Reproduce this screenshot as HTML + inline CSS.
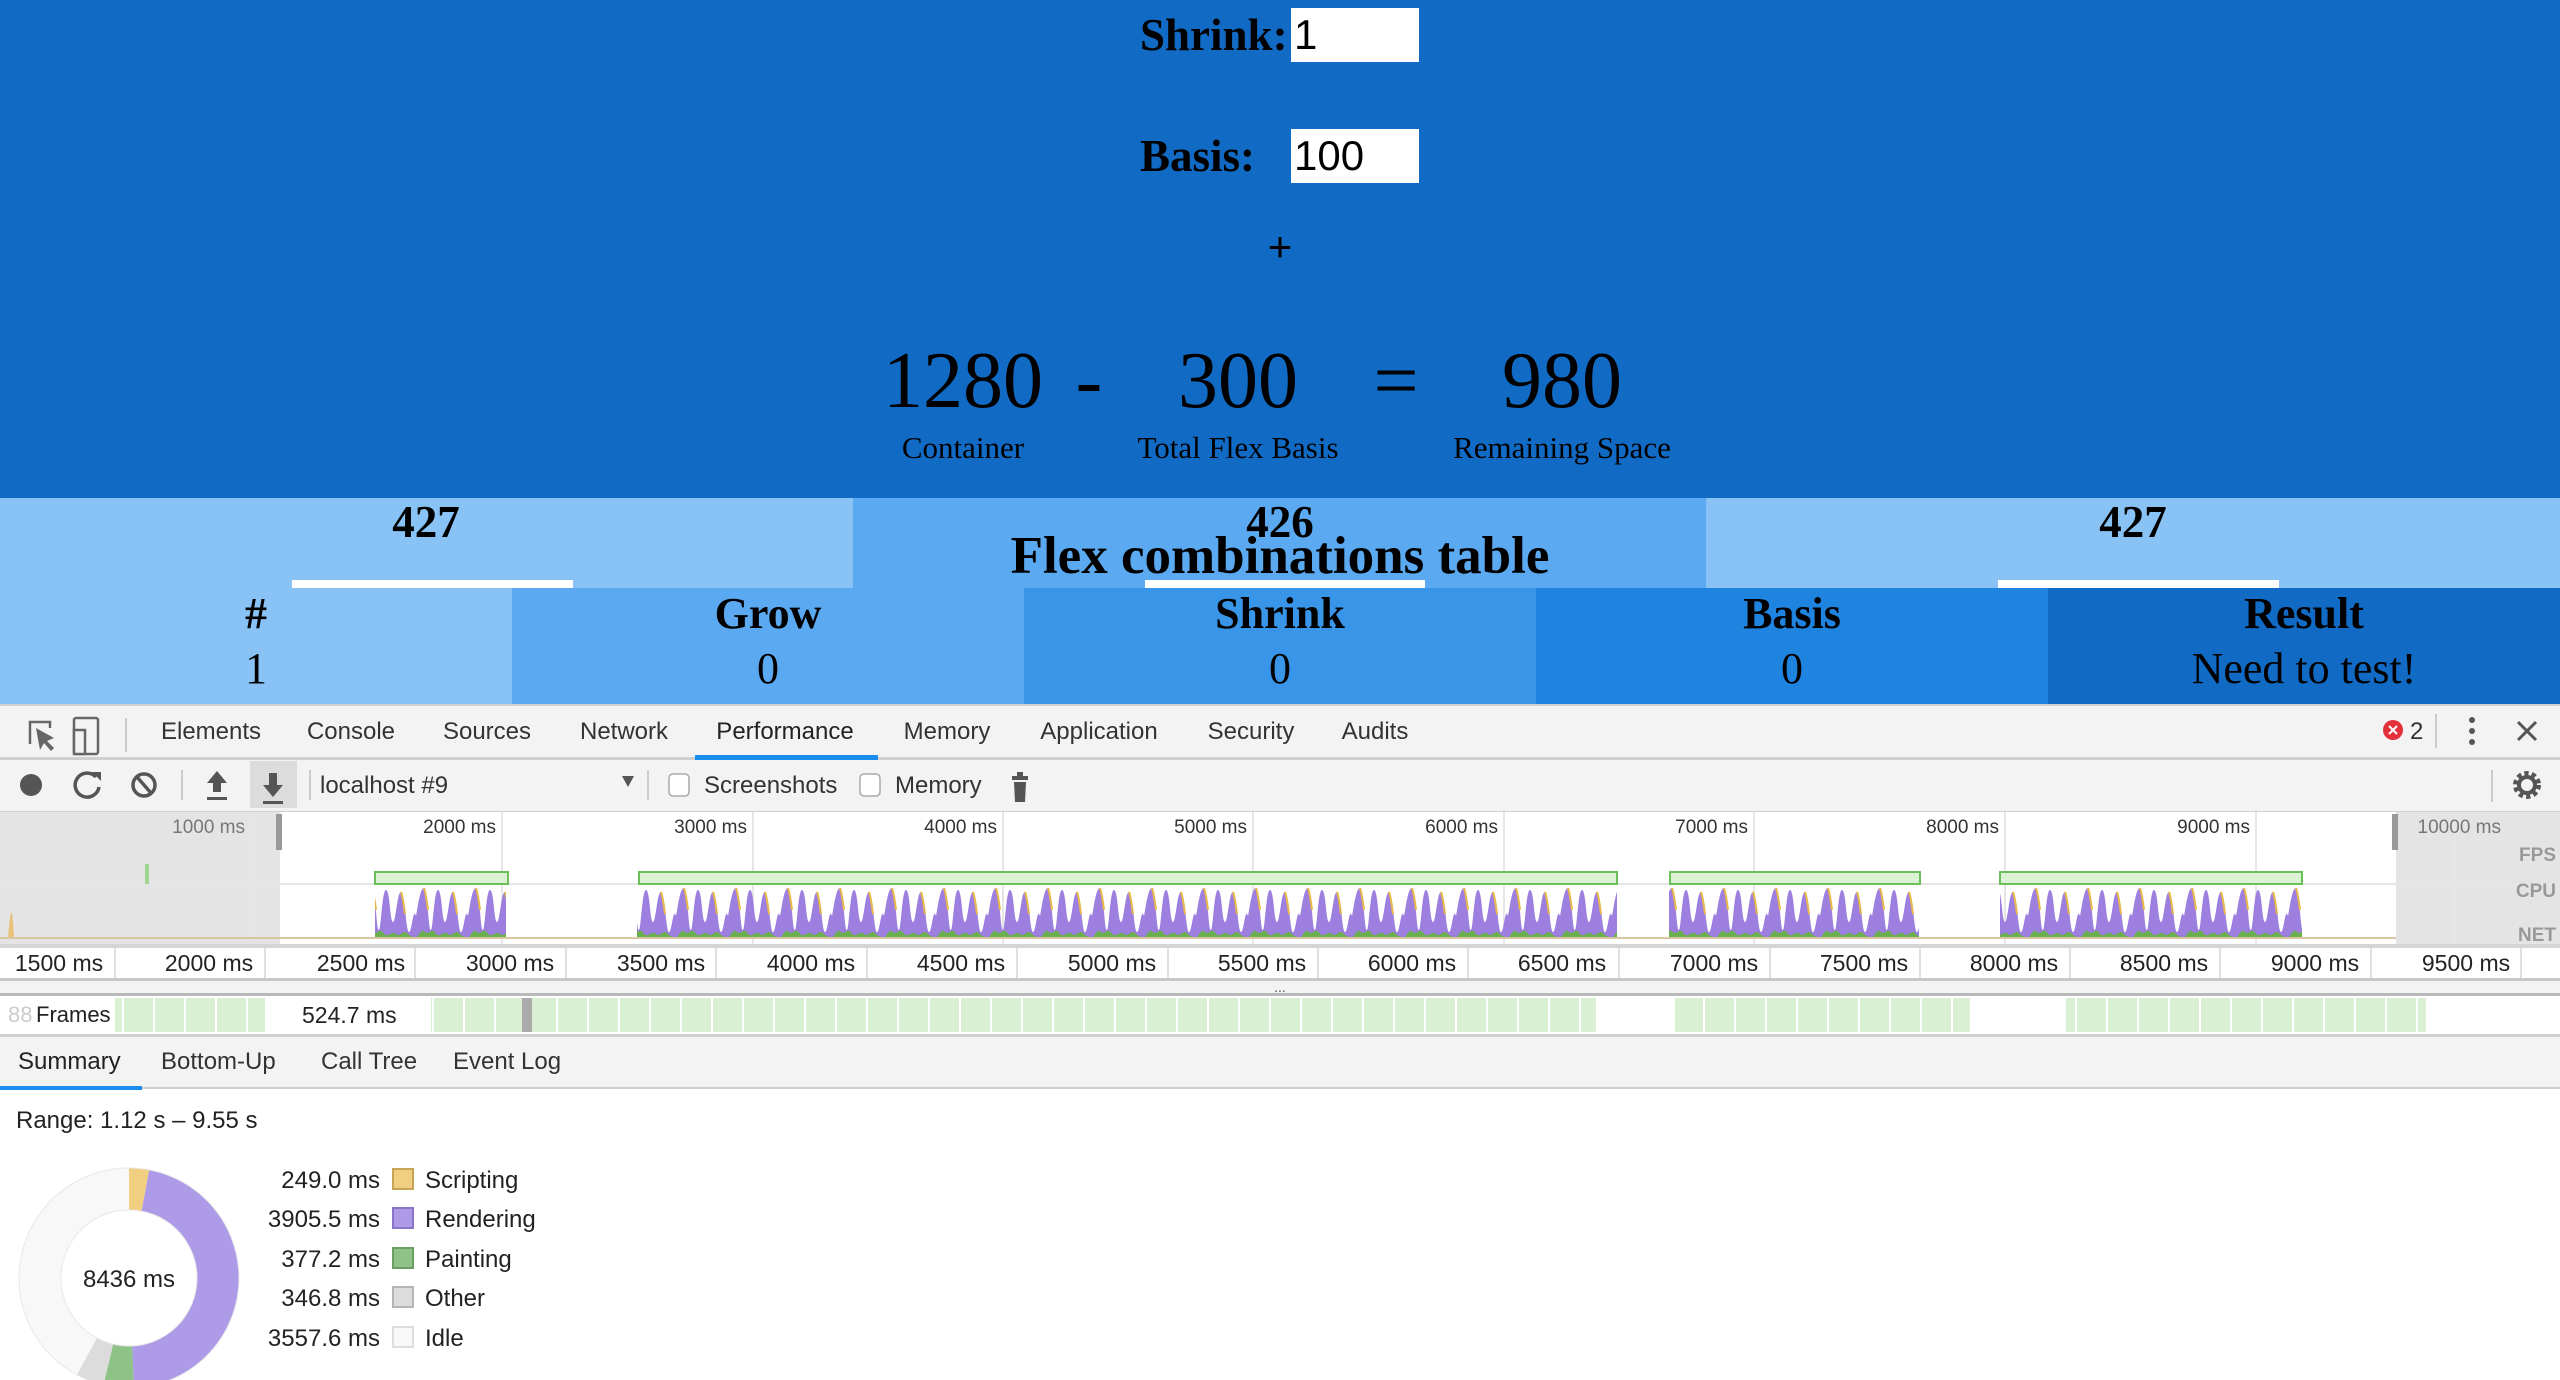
<!DOCTYPE html>
<html><head><meta charset="utf-8"><style>
*{margin:0;padding:0;box-sizing:border-box}
body{width:2560px;height:1380px;overflow:hidden;position:relative;background:#fff;font-family:"Liberation Serif",serif}
.a{position:absolute}
.s{font-family:"Liberation Sans",sans-serif}
.c{transform:translateX(-50%);white-space:nowrap}
span{white-space:nowrap}
</style></head><body>
<div class="a" style="left:0;top:0;width:2560px;height:498px;background:#116bc5"></div>
<div class="a" style="left:1140px;top:8px;font-size:45px;font-weight:bold;line-height:54px">Shrink:</div>
<div class="a s" style="left:1291px;top:8px;width:128px;height:54px;background:#fff;font-size:42px;line-height:54px;padding-left:3px">1</div>
<div class="a" style="left:1140px;top:129px;font-size:45px;font-weight:bold;line-height:54px">Basis:</div>
<div class="a s" style="left:1291px;top:129px;width:128px;height:54px;background:#fff;font-size:42px;line-height:54px;padding-left:3px">100</div>
<div class="a c s" style="left:1280px;top:222px;font-size:42px;line-height:50px">+</div>
<div class="a c" style="left:963px;top:336px;font-size:80px;line-height:90px">1280</div>
<div class="a c" style="left:1089px;top:336px;font-size:80px;line-height:90px">-</div>
<div class="a c" style="left:1238px;top:336px;font-size:80px;line-height:90px">300</div>
<div class="a c" style="left:1396px;top:336px;font-size:80px;line-height:90px">=</div>
<div class="a c" style="left:1562px;top:336px;font-size:80px;line-height:90px">980</div>
<div class="a c" style="left:963px;top:428px;font-size:31px;line-height:40px">Container</div>
<div class="a c" style="left:1238px;top:428px;font-size:31px;line-height:40px">Total Flex Basis</div>
<div class="a c" style="left:1562px;top:428px;font-size:31px;line-height:40px">Remaining Space</div>

<div class="a" style="left:0;top:498px;width:853px;height:90px;background:#89c3f5"></div>
<div class="a" style="left:853px;top:498px;width:853px;height:90px;background:#5aa9f1"></div>
<div class="a" style="left:1706px;top:498px;width:854px;height:90px;background:#89c3f5"></div>
<div class="a" style="left:292px;top:580px;width:281px;height:8px;background:#fff"></div>
<div class="a" style="left:1145px;top:580px;width:280px;height:8px;background:#fff"></div>
<div class="a" style="left:1998px;top:580px;width:281px;height:8px;background:#fff"></div>
<div class="a c" style="left:426px;top:496px;font-size:45px;font-weight:bold;line-height:52px">427</div>
<div class="a c" style="left:1280px;top:496px;font-size:45px;font-weight:bold;line-height:52px">426</div>
<div class="a c" style="left:2133px;top:496px;font-size:45px;font-weight:bold;line-height:52px">427</div>
<div class="a c" style="left:1280px;top:526px;font-size:53px;font-weight:bold;line-height:60px">Flex combinations table</div>

<div class="a" style="left:0;top:588px;width:512px;height:116px;background:#89c3f5"></div>
<div class="a" style="left:512px;top:588px;width:512px;height:116px;background:#5aa9f1"></div>
<div class="a" style="left:1024px;top:588px;width:512px;height:116px;background:#3895e8"></div>
<div class="a" style="left:1536px;top:588px;width:512px;height:116px;background:#1f83e0"></div>
<div class="a" style="left:2048px;top:588px;width:512px;height:116px;background:#116bc5"></div>
<div class="a c" style="left:256px;top:588px;font-size:44px;font-weight:bold;line-height:52px">#</div>
<div class="a c" style="left:768px;top:588px;font-size:44px;font-weight:bold;line-height:52px">Grow</div>
<div class="a c" style="left:1280px;top:588px;font-size:44px;font-weight:bold;line-height:52px">Shrink</div>
<div class="a c" style="left:1792px;top:588px;font-size:44px;font-weight:bold;line-height:52px">Basis</div>
<div class="a c" style="left:2304px;top:588px;font-size:44px;font-weight:bold;line-height:52px">Result</div>
<div class="a c" style="left:256px;top:643px;font-size:44px;line-height:52px">1</div>
<div class="a c" style="left:768px;top:643px;font-size:44px;line-height:52px">0</div>
<div class="a c" style="left:1280px;top:643px;font-size:44px;line-height:52px">0</div>
<div class="a c" style="left:1792px;top:643px;font-size:44px;line-height:52px">0</div>
<div class="a c" style="left:2304px;top:643px;font-size:44px;line-height:52px">Need to test!</div>

<!-- devtools -->
<div class="a" style="left:0;top:704px;width:2560px;height:385px;background:#f3f3f3;border-top:2px solid #d0d0d0"></div>
<div class="a" style="left:0;top:757px;width:2560px;height:3px;background:#cfcfcf"></div>
<div class="a" style="left:695px;top:755px;width:183px;height:5px;background:#1a8cf0"></div>
<div class="s" style="position:absolute;left:0;top:712px;font-size:24px;color:#333;line-height:40px">
<span class="a c" style="left:211px">Elements</span><span class="a c" style="left:351px">Console</span><span class="a c" style="left:487px">Sources</span><span class="a c" style="left:624px">Network</span><span class="a c" style="left:785px;color:#222">Performance</span><span class="a c" style="left:947px">Memory</span><span class="a c" style="left:1099px">Application</span><span class="a c" style="left:1251px">Security</span><span class="a c" style="left:1375px">Audits</span></div>
<svg class="a" style="left:0;top:704px" width="2560" height="676">
<g fill="none" stroke="#666" stroke-width="2.5">
<path d="M30 40V18h20v6"/>
<path d="M36 24l4 22 4-7 7 8 3-3-7-7 7-3z" fill="#666" stroke="none"/>
<rect x="74" y="14" width="24" height="36" rx="2"/><rect x="74" y="26" width="11" height="24" fill="#f3f3f3"/>
</g>
<line x1="126" y1="14" x2="126" y2="48" stroke="#ccc" stroke-width="2"/>
<circle cx="2393" cy="26" r="10" fill="#e2313a"/><path d="M2389 22l8 8M2397 22l-8 8" stroke="#fff" stroke-width="2"/>
<text x="2410" y="35" font-family="Liberation Sans" font-size="24" fill="#333">2</text>
<line x1="2436" y1="10" x2="2436" y2="44" stroke="#ccc" stroke-width="2"/>
<circle cx="2472" cy="16" r="3" fill="#555"/><circle cx="2472" cy="27" r="3" fill="#555"/><circle cx="2472" cy="38" r="3" fill="#555"/>
<path d="M2518 18l18 18M2536 18l-18 18" stroke="#555" stroke-width="3"/>
<!-- toolbar -->
<circle cx="31" cy="81" r="11" fill="#555"/>
<path d="M96 73a12 12 0 1 0 3 10" fill="none" stroke="#555" stroke-width="3.5"/><path d="M92 68l9 0 0 9z" fill="#555"/>
<circle cx="144" cy="81" r="11" fill="none" stroke="#555" stroke-width="3.5"/><path d="M137 73l14 16" stroke="#555" stroke-width="3.5"/>
<line x1="182" y1="66" x2="182" y2="96" stroke="#ccc" stroke-width="2"/>
<path d="M217 67l-10 12h6v9h8v-9h6z M207 93h20v3h-20z" fill="#555"/>
<rect x="250" y="57" width="47" height="47" fill="#dcdcdc"/>
<path d="M273 93l-10-12h6v-12h8v12h6z M263 97h20v3h-20z" fill="#555"/>
<line x1="310" y1="66" x2="310" y2="96" stroke="#ccc" stroke-width="2"/>
<text x="320" y="89" font-family="Liberation Sans" font-size="24" fill="#333">localhost #9</text>
<path d="M622 72h12l-6 11z" fill="#555"/>
<line x1="648" y1="66" x2="648" y2="96" stroke="#ccc" stroke-width="2"/>
<rect x="669" y="70" width="20" height="22" rx="4" fill="#fff" stroke="#aaa" stroke-width="1.5"/>
<text x="704" y="89" font-family="Liberation Sans" font-size="24" fill="#333">Screenshots</text>
<rect x="860" y="70" width="20" height="22" rx="4" fill="#fff" stroke="#aaa" stroke-width="1.5"/>
<text x="895" y="89" font-family="Liberation Sans" font-size="24" fill="#333">Memory</text>
<path d="M1012 72h16v4h-16z M1017 68h6v4h-6z M1014 78h12l-1 20h-10z" fill="#555"/>
<line x1="2492" y1="66" x2="2492" y2="98" stroke="#ccc" stroke-width="2"/>
<circle cx="2527" cy="81" r="11" fill="none" stroke="#555" stroke-width="6" stroke-dasharray="4 3"/><circle cx="2527" cy="81" r="8" fill="none" stroke="#555" stroke-width="4"/>
<line x1="0" y1="108" x2="2560" y2="108" stroke="#cfcfcf" stroke-width="2"/>
</svg>

<svg class="a" style="left:0;top:812px" width="2560" height="280">
<defs>
<pattern id="cpu" width="52" height="52" patternUnits="userSpaceOnUse" x="0" y="74">
<path d="M0 52V30C2 20 4 2 8 2 12 2 12 44 15 44 17 44 18 4 22 4 26 4 26 36 29 36 32 36 33 6 37 6 41 6 42 46 45 46 48 46 49 20 52 30V52z" fill="#9d7fe0"/>
<path d="M0 52C4 48 6 42 9 46 12 50 16 40 20 48 24 52 28 44 32 48 36 52 40 42 44 48 48 52 50 50 52 52z" fill="#6ab04c"/>
<path d="M8 2C10 8 11 16 12 24M37 6C39 12 40 20 41 28" stroke="#e8b84a" stroke-width="2" fill="none"/>
</pattern>
<pattern id="fr" width="31" height="30" patternUnits="userSpaceOnUse"><rect x="0" y="0" width="29" height="30" fill="#d9f0d3"/></pattern>
</defs>
<rect x="0" y="0" width="2560" height="132" fill="#fff"/>
<rect x="0" y="0" width="280" height="132" fill="#e4e4e4"/>
<rect x="2396" y="0" width="164" height="132" fill="#e4e4e4"/>
<rect x="276" y="2" width="6" height="36" fill="#999"/>
<rect x="2392" y="2" width="6" height="36" fill="#999"/>
<g stroke="#e6e6e6" stroke-width="2">
<line x1="251" y1="0" x2="251" y2="132"/><line x1="502" y1="0" x2="502" y2="132"/><line x1="753" y1="0" x2="753" y2="132"/><line x1="1003" y1="0" x2="1003" y2="132"/><line x1="1253" y1="0" x2="1253" y2="132"/><line x1="1504" y1="0" x2="1504" y2="132"/><line x1="1754" y1="0" x2="1754" y2="132"/><line x1="2005" y1="0" x2="2005" y2="132"/><line x1="2256" y1="0" x2="2256" y2="132"/><line x1="0" y1="72" x2="2560" y2="72"/><line x1="2455" y1="0" x2="2455" y2="132"/>
</g>
<g font-family="Liberation Sans" font-size="19" fill="#333" text-anchor="end">
<text x="245" y="21" fill="#777">1000 ms</text><text x="496" y="21">2000 ms</text><text x="747" y="21">3000 ms</text><text x="997" y="21">4000 ms</text><text x="1247" y="21">5000 ms</text><text x="1498" y="21">6000 ms</text><text x="1748" y="21">7000 ms</text><text x="1999" y="21">8000 ms</text><text x="2250" y="21">9000 ms</text><text x="2501" y="21" fill="#777">10000 ms</text>
<text x="2556" y="49" fill="#999" font-weight="bold">FPS</text><text x="2556" y="85" fill="#999" font-weight="bold">CPU</text><text x="2556" y="129" fill="#999" font-weight="bold">NET</text>
</g>
<g fill="#dcf2d4" stroke="#6cc05a" stroke-width="2">
<rect x="375" y="60" width="133" height="12"/><rect x="639" y="60" width="978" height="12"/><rect x="1670" y="60" width="250" height="12"/><rect x="2000" y="60" width="302" height="12"/>
</g>
<rect x="145" y="52" width="4" height="20" fill="#9fd68f"/>
<rect x="375" y="74" width="131" height="52" fill="url(#cpu)"/>
<rect x="637" y="74" width="980" height="52" fill="url(#cpu)"/>
<rect x="1669" y="74" width="250" height="52" fill="url(#cpu)"/>
<rect x="2000" y="74" width="302" height="52" fill="url(#cpu)"/>
<path d="M8 126C10 100 12 85 14 126z" fill="#e8c27a"/>
<line x1="0" y1="126" x2="2396" y2="126" stroke="#d8c7a0" stroke-width="2"/>
<!-- ruler -->
<rect x="0" y="132" width="2560" height="4" fill="#d5d5d5"/>
<rect x="0" y="136" width="2560" height="30" fill="#fff"/>
<g font-family="Liberation Sans" font-size="23" fill="#222" text-anchor="middle">
<text x="59" y="159">1500 ms</text><text x="209" y="159">2000 ms</text><text x="361" y="159">2500 ms</text><text x="510" y="159">3000 ms</text><text x="661" y="159">3500 ms</text><text x="811" y="159">4000 ms</text><text x="961" y="159">4500 ms</text><text x="1112" y="159">5000 ms</text><text x="1262" y="159">5500 ms</text><text x="1412" y="159">6000 ms</text><text x="1562" y="159">6500 ms</text><text x="1714" y="159">7000 ms</text><text x="1864" y="159">7500 ms</text><text x="2014" y="159">8000 ms</text><text x="2164" y="159">8500 ms</text><text x="2315" y="159">9000 ms</text><text x="2466" y="159">9500 ms</text>
</g>
<g stroke="#e0e0e0" stroke-width="2"><line x1="115" y1="136" x2="115" y2="166"/><line x1="265" y1="136" x2="265" y2="166"/><line x1="415" y1="136" x2="415" y2="166"/><line x1="566" y1="136" x2="566" y2="166"/><line x1="716" y1="136" x2="716" y2="166"/><line x1="867" y1="136" x2="867" y2="166"/><line x1="1017" y1="136" x2="1017" y2="166"/><line x1="1168" y1="136" x2="1168" y2="166"/><line x1="1318" y1="136" x2="1318" y2="166"/><line x1="1468" y1="136" x2="1468" y2="166"/><line x1="1619" y1="136" x2="1619" y2="166"/><line x1="1770" y1="136" x2="1770" y2="166"/><line x1="1920" y1="136" x2="1920" y2="166"/><line x1="2070" y1="136" x2="2070" y2="166"/><line x1="2220" y1="136" x2="2220" y2="166"/><line x1="2371" y1="136" x2="2371" y2="166"/><line x1="2521" y1="136" x2="2521" y2="166"/></g>
<rect x="0" y="166" width="2560" height="3" fill="#c8c8c8"/>
<rect x="0" y="169" width="2560" height="12" fill="#f3f3f3"/>
<text x="1280" y="180" font-family="Liberation Sans" font-size="14" text-anchor="middle" fill="#555">...</text>
<rect x="0" y="181" width="2560" height="3" fill="#b9b9b9"/>
<rect x="0" y="184" width="2560" height="38" fill="#fff"/>
<rect x="115" y="186" width="150" height="34" fill="url(#fr)"/>
<rect x="431" y="186" width="1165" height="34" fill="url(#fr)"/>
<rect x="1675" y="186" width="295" height="34" fill="url(#fr)"/>
<rect x="2066" y="186" width="360" height="34" fill="url(#fr)"/>
<rect x="278" y="186" width="138" height="34" fill="#fff"/>
<rect x="522" y="186" width="10" height="34" fill="#aaa"/>
<text x="8" y="210" font-family="Liberation Sans" font-size="22" fill="#ccc">88</text>
<text x="36" y="210" font-family="Liberation Sans" font-size="22" fill="#222">Frames</text>
<text x="302" y="211" font-family="Liberation Sans" font-size="23" fill="#222">524.7 ms</text>
<rect x="0" y="222" width="2560" height="3" fill="#cfcfcf"/>
</svg>

<div class="s" style="position:absolute;left:0;top:1044px;font-size:24px;color:#333;line-height:36px">
<span class="a" style="left:18px;color:#222">Summary</span><span class="a" style="left:161px">Bottom-Up</span><span class="a" style="left:321px">Call Tree</span><span class="a" style="left:453px">Event Log</span></div>
<div class="a" style="left:0;top:1087px;width:2560px;height:2px;background:#cfcfcf"></div>
<div class="a" style="left:0;top:1086px;width:142px;height:4px;background:#1a8cf0"></div>
<div class="a" style="left:0;top:1090px;width:2560px;height:290px;background:#fff"></div>
<div class="a s" style="left:16px;top:1105px;font-size:24px;color:#222;line-height:32px">Range: 1.12 s – 9.55 s</div>
<svg class="a" style="left:0;top:1090px" width="700" height="290">
<g transform="rotate(-90 129 188)" fill="none" stroke-width="42">
<circle cx="129" cy="188" r="89" stroke="#f0cf81" stroke-dasharray="16.5 559.2"/>
<circle cx="129" cy="188" r="89" stroke="#ae9be8" stroke-dasharray="0 16.5 258.9 559.2"/>
<circle cx="129" cy="188" r="89" stroke="#8fc287" stroke-dasharray="0 275.4 25 559.2"/>
<circle cx="129" cy="188" r="89" stroke="#dcdcdc" stroke-dasharray="0 300.4 23 559.2"/>
<circle cx="129" cy="188" r="89" stroke="#f8f8f8" stroke-dasharray="0 323.4 235.8 559.2"/>
</g>
<circle cx="129" cy="188" r="110" fill="none" stroke="#e8e8e8" stroke-width="1"/>
<circle cx="129" cy="188" r="68" fill="#fff" stroke="#e8e8e8" stroke-width="1"/>
<text x="129" y="197" text-anchor="middle" font-family="Liberation Sans" font-size="24" fill="#222">8436 ms</text>
<g font-family="Liberation Sans" font-size="24" fill="#222">
<g text-anchor="end"><text x="380" y="98">249.0 ms</text><text x="380" y="137">3905.5 ms</text><text x="380" y="177">377.2 ms</text><text x="380" y="216">346.8 ms</text><text x="380" y="256">3557.6 ms</text></g>
<text x="425" y="98">Scripting</text><text x="425" y="137">Rendering</text><text x="425" y="177">Painting</text><text x="425" y="216">Other</text><text x="425" y="256">Idle</text>
</g>
<g stroke-width="2"><rect x="393" y="79" width="20" height="20" fill="#f0cf81" stroke="#c8a45a"/><rect x="393" y="118" width="20" height="20" fill="#ae9be8" stroke="#8a73c8"/><rect x="393" y="158" width="20" height="20" fill="#8fc287" stroke="#6a9f62"/><rect x="393" y="197" width="20" height="20" fill="#dcdcdc" stroke="#b5b5b5"/><rect x="393" y="237" width="20" height="20" fill="#f8f8f8" stroke="#ddd"/></g>
</svg>
</body></html>
